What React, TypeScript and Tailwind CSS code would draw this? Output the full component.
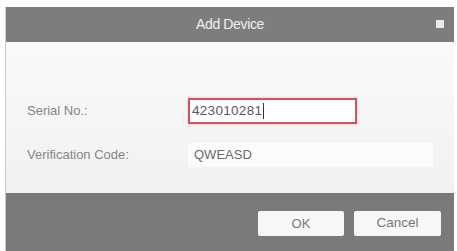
import React from "react";

export default function App() {
  return (
    <div className="w-[457px] h-[251px] bg-white pt-[7px] pl-[5px] pr-[3px] overflow-hidden" style={{ fontFamily: '"Liberation Sans", Arial, sans-serif' }}>
      <div className="flex flex-col h-[244px] border-l border-[#c8c8c8]">
        <div className="relative h-[35px] bg-[#7d7d7d] flex items-center justify-center">
          <span className="text-[14px] text-[#f0f0f0] tracking-tight">Add Device</span>
          <span className="absolute right-[10px] top-[13px] w-[8px] h-[8px] bg-[#e8e8e8] rounded-[1px]" />
        </div>
        <div className="h-[151px] bg-gradient-to-b from-[#fafafa] to-[#f1f1f1] flex flex-col pl-[21px] pt-[56px]">
          <div className="flex items-center h-[26px]">
            <span className="w-[161px] text-[13px] text-[#858585]">Serial No.:</span>
            <div className="w-[169px] h-[26px] border-2 border-[#d2525e] bg-white flex items-center pl-[2px] shadow-[0_0_2px_#f0b0b8]">
              <span className="text-[13.5px] text-[#5a5a5a] tracking-[0.3px]">423010281</span>
              <span className="w-px h-[16px] bg-[#333] ml-px" />
            </div>
          </div>
          <div className="flex items-center h-[26px] mt-[18px]">
            <span className="w-[161px] text-[13px] text-[#858585]">Verification Code:</span>
            <div className="w-[245px] h-[24px] bg-[#fbfbfb] flex items-center pl-[6px]">
              <span className="text-[13px] text-[#6a6a6a]">QWEASD</span>
            </div>
          </div>
        </div>
        <div className="flex-1 bg-[#7a7a7a] flex items-start justify-end pt-[18px] pr-[13px] gap-[10px]">
          <button className="w-[86px] h-[25px] bg-[#f7f7f7] rounded-[2px] text-[13px] text-[#777]">OK</button>
          <button className="w-[87px] h-[25px] bg-[#f7f7f7] rounded-[2px] text-[13.5px] text-[#777]">Cancel</button>
        </div>
      </div>
    </div>
  );
}
